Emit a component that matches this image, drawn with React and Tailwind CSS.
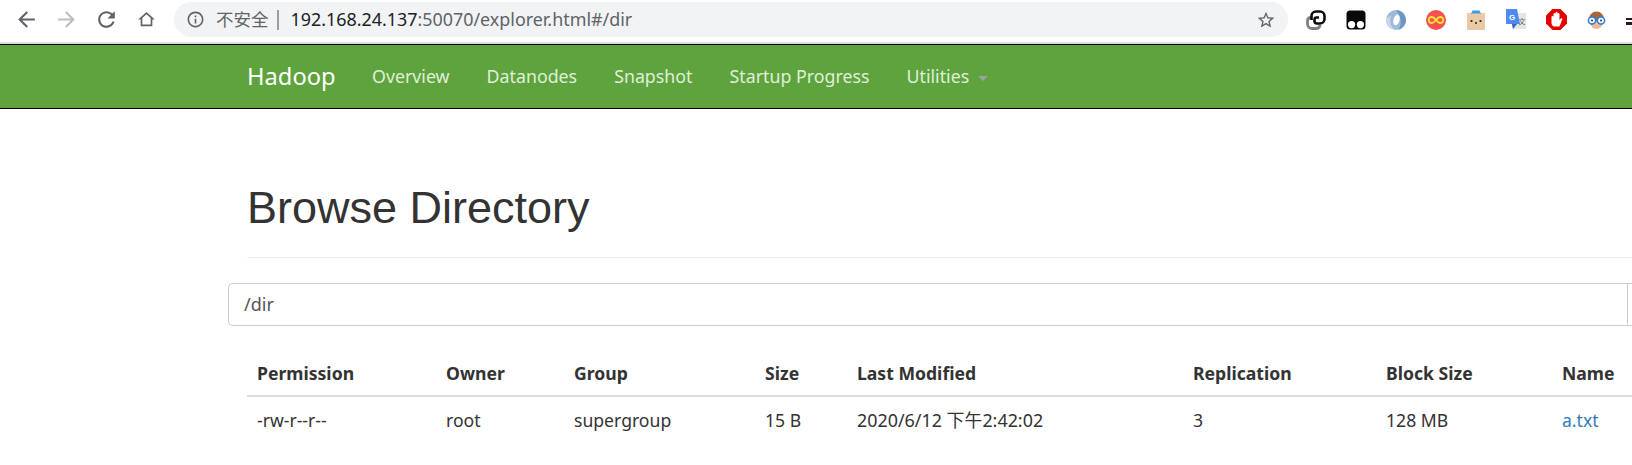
const columns = [
    { title: 'Permission', value: '-rw-r--r--', width: 'w-[189px]' },
    { title: 'Owner', value: 'root', width: 'w-[128px]' },
    { title: 'Group', value: 'supergroup', width: 'w-[191px]' },
    { title: 'Size', value: '15 B', width: 'w-[92px]' },
    { title: 'Last Modified', value: '2020/6/12 下午2:42:02', width: 'w-[336px]', cell: 'text-[17.900px]' },
    { title: 'Replication', value: '3', width: 'w-[193px]' },
    { title: 'Block Size', value: '128 MB', width: 'w-[176px]' },
    { title: 'Name', value: 'a.txt', width: 'w-[120px]', cell: 'text-[#337ab7]' },
];

const navLinks = ['Overview', 'Datanodes', 'Snapshot', 'Startup Progress'];

const ChromeIcon = ({ d, size = 25, box = '0 0 24 24', className = '' }) => (
    <svg width={size} height={size} viewBox={box} fill="currentColor" className={`shrink-0 ${className}`}>
        <path d={d} />
    </svg>
);

const ExtensionIcons = () => (
    <div className="flex items-center gap-[20px] pl-[18px] shrink-0">
        {/* chain links */}
        <svg width="20" height="20" viewBox="0 0 20 20" fill="none" className="shrink-0">
            <path d="M5 7.500H4.500A3.500 3.500 0 0 0 1.500 11v3a4.500 4.500 0 0 0 4.500 4.500h4a4 4 0 0 0 4-3.500" stroke="#808080" strokeWidth="2.800" />
            <path d="M5.500 10V6a4.500 4.500 0 0 1 4.500-4.500h4A4.500 4.500 0 0 1 18.500 6v3a4.500 4.500 0 0 1-4.500 4.500h-3A2.500 2.500 0 0 1 8.500 11v-1.500A2 2 0 0 1 10.500 7.500H13" stroke="#0c0c0c" strokeWidth="2.600" />
        </svg>
        {/* tampermonkey */}
        <svg width="20" height="20" viewBox="0 0 20 20" className="shrink-0">
            <rect x="0.500" y="0.500" width="19" height="19" rx="3.500" fill="#0a0a0a" />
            <circle cx="5.600" cy="14.600" r="3.600" fill="#fff" />
            <circle cx="14.400" cy="14.600" r="3.600" fill="#fff" />
        </svg>
        {/* blue ring */}
        <svg width="20" height="20" viewBox="0 0 20 20" className="shrink-0">
            <circle cx="10" cy="10" r="10" fill="#9dbbd9" />
            <path d="M10 0a10 10 0 0 1 2 19.800C16 16 16 7 10 0z" fill="#6d96c4" />
            <path d="M0 10a10 10 0 0 0 10 10C5 18 3 12 5 6 2 7 0 8 0 10z" fill="#c6d7e8" />
            <ellipse cx="10.500" cy="10" rx="3" ry="5.500" transform="rotate(15 10.500 10)" fill="#fff" />
        </svg>
        {/* infinity */}
        <svg width="20" height="20" viewBox="0 0 20 20" fill="none" className="shrink-0">
            <circle cx="10" cy="10" r="10" fill="#f8504f" />
            <path d="M10 10c-1.500-2-2.700-3-4.200-3a3 3 0 0 0 0 6c1.500 0 2.700-1 4.200-3s2.700-3 4.200-3a3 3 0 0 1 0 6c-1.500 0-2.700-1-4.200-3z" stroke="#fde23a" strokeWidth="1.800" />
        </svg>
        {/* box face */}
        <svg width="20" height="20" viewBox="0 0 20 20" className="shrink-0">
            <rect x="1" y="3" width="18" height="17" rx="1" fill="#eac9a5" />
            <path d="M5 3.500 6.500 0.500h7L15 3.500z" fill="#3f9ee0" />
            <circle cx="5.500" cy="11" r="1.100" fill="#222" />
            <circle cx="14.500" cy="11" r="1.100" fill="#222" />
            <circle cx="10" cy="13" r="1" fill="#222" />
        </svg>
        {/* google translate */}
        <svg width="20" height="21" viewBox="0 0 20 21" className="shrink-0">
            <rect x="6" y="4" width="14" height="16" fill="#e4e6e6" />
            <path d="M0 0h11l3 15H0z" fill="#4d8bf0" />
            <path d="M6 15h5l-4 5z" fill="#3b5fc7" />
            <text x="3" y="10.500" fontSize="8" fontWeight="700" fill="#fff" fontFamily="'Liberation Sans', sans-serif">G</text>
            <text x="12.500" y="15" fontSize="7" fill="#667" fontFamily="'Noto Sans CJK SC', sans-serif">文</text>
        </svg>
        {/* adblock */}
        <svg width="21" height="21" viewBox="0 0 21 21" className="shrink-0">
            <path d="M6.500 0h8L21 6.500v8L14.500 21h-8L0 14.500v-8z" fill="#e40000" />
            <path d="M5.500 8a1 1 0 0 1 2 0v-3a1 1 0 0 1 2 0v-1.200a1 1 0 0 1 2 0V5a1 1 0 0 1 2 0v6l1.300-1.500c.8-.8 2 0 1.400 1L13.500 17.500H8c-1.600-.5-2.500-2-2.500-3.500z" fill="#fff" />
        </svg>
        {/* avatar with glasses */}
        <svg width="19" height="20" viewBox="0 0 19 20" className="shrink-0">
            <path d="M2 9a7.500 7.500 0 0 1 15 0v3H2z" fill="#a8653c" />
            <path d="M3 11c0 5 3 8 6.500 8S16 16 16 11z" fill="#f0b99a" />
            <circle cx="5" cy="10.500" r="3.600" fill="#fff" stroke="#2f7fd6" strokeWidth="1.600" />
            <circle cx="14" cy="10.500" r="3.600" fill="#fff" stroke="#2f7fd6" strokeWidth="1.600" />
            <circle cx="5" cy="10.500" r="1" fill="#234" />
            <circle cx="14" cy="10.500" r="1" fill="#234" />
        </svg>
        <svg width="12" height="20" viewBox="0 0 12 20" className="shrink-0">
            <path d="M0 8h12v2H0zM0 12h7l2 3H0z" fill="#2a1a18" />
        </svg>
    </div>
);

const Toolbar = () => (
    <div className="h-[39px] mb-[3px] flex items-center shrink-0 bg-white">
        <div className="flex items-center gap-[15px] pl-[14px] pr-[15px] shrink-0 text-[#5f6368]">
            <ChromeIcon d="M20 11H7.830l5.590-5.590L12 4l-8 8 8 8 1.410-1.410L7.830 13H20v-2z" />
            <ChromeIcon className="text-[#bcbec1]" d="M4 11h12.170l-5.590-5.590L12 4l8 8-8 8-1.410-1.410L16.170 13H4v-2z" />
            <ChromeIcon d="M17.650 6.350C16.200 4.900 14.210 4 12 4c-4.420 0-7.990 3.580-7.990 8s3.570 8 7.990 8c3.730 0 6.840-2.550 7.730-6h-2.080c-.82 2.330-3.040 4-5.650 4-3.310 0-6-2.690-6-6s2.690-6 6-6c1.660 0 3.140.69 4.220 1.780L13 11h7V4l-2.350 2.350z" />
            <ChromeIcon box="-3 -3 30 30" d="M12 5.690l5 4.500V18H7v-7.810l5-4.500M12 3L2 12h3v8h14v-8h3L12 3z" />
        </div>
        <div className="w-[1114px] h-[35px] rounded-full bg-[#f1f3f4] flex items-center pl-[12px] pr-[12px] shrink-0 font-['Noto_Sans','Noto_Sans_CJK_SC',sans-serif] text-[17.900px] text-[#5f6368]">
            <ChromeIcon size={19} d="M11 7h2v2h-2zm0 4h2v6h-2zm1-9C6.480 2 2 6.480 2 12s4.480 10 10 10 10-4.480 10-10S17.520 2 12 2zm0 18c-4.410 0-8-3.590-8-8s3.590-8 8-8 8 3.590 8 8-3.590 8-8 8z" />
            <span className="ml-[11px] text-[17.500px]">不安全</span>
            <span className="ml-[8px] mr-[12px] h-[20px] w-[2px] bg-[#9a9ca0]"></span>
            <span className="text-[#202124]">192.168.24.137</span>
            <span>:50070/explorer.html#/dir</span>
            <ChromeIcon size={20} className="ml-auto" d="M22 9.240l-7.190-.62L12 2 9.190 8.630 2 9.240l5.460 4.730L5.820 21 12 17.270 18.180 21l-1.630-7.030L22 9.240zM12 15.400l-3.760 2.270 1-4.280-3.320-2.880 4.380-.38L12 6.100l1.710 4.040 4.380.38-3.320 2.880 1 4.280L12 15.400z" />
        </div>
        <ExtensionIcons />
    </div>
);

const Navbar = () => (
    <nav className="h-[65px] shrink-0 bg-[#5fa33e] border-y border-black flex items-center pl-[247px] text-[#dff0d8] font-['Noto_Sans',sans-serif] text-[17.800px]">
        <span className="text-[23.700px] text-white w-[125px]">Hadoop</span>
        <div className="flex gap-[37px]">
            {navLinks.map((link) => (
                <span key={link}>{link}</span>
            ))}
            <span className="flex items-center">
                Utilities
                <span className="ml-[9px] mt-[3px] border-x-[5px] border-t-[5px] border-x-transparent border-t-[#a0a0a0]"></span>
            </span>
        </div>
    </nav>
);

const App = () => {
    return (
        <div className="w-[1632px] h-[465px] overflow-hidden bg-white flex flex-col text-[#333]">
            <Toolbar />
            <div className="h-[2px] bg-[#dadce0] shrink-0"></div>
            <Navbar />
            <main className="pl-[247px]">
                <h1 className="mt-[74px] text-[45px] leading-[50px] font-['Liberation_Sans',sans-serif]">Browse Directory</h1>
                <div className="mt-[24px] h-px bg-[#eeeeee]"></div>
                <div className="mt-[25px] -ml-[19px] h-[43px] flex border border-[#cccccc] border-r-0 rounded-l-[5px] font-['Noto_Sans',sans-serif] text-[18px]">
                    <div className="w-[1398px] flex items-center pl-[15px] text-[#555]">/dir</div>
                    <div className="flex-1 border-l border-[#cccccc]"></div>
                </div>
                <table className="mt-[26px] table-fixed w-[1425px] border-collapse font-['Noto_Sans','Noto_Sans_CJK_SC',sans-serif] text-[17.600px]">
                    <thead>
                        <tr className="border-b-2 border-[#dddddd]">
                            {columns.map((col) => (
                                <th key={col.title} className={`${col.width} h-[44px] px-[10px] text-left font-bold`}>{col.title}</th>
                            ))}
                        </tr>
                    </thead>
                    <tbody>
                        <tr>
                            {columns.map((col) => (
                                <td key={col.title} className={`h-[48px] px-[10px] ${col.cell || ''}`}>{col.value}</td>
                            ))}
                        </tr>
                    </tbody>
                </table>
            </main>
        </div>
    );
};

export default App;
